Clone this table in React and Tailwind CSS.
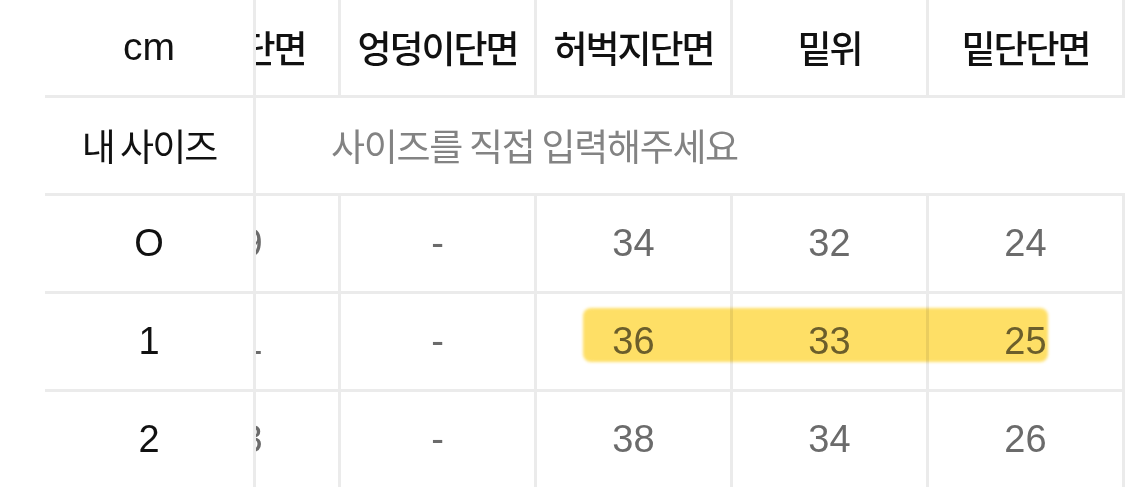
import React, { useLayoutEffect, useRef } from "react";

const KR = { fontFamily: '"Noto Sans CJK KR", "Noto Sans", sans-serif' };
const LAT = { fontFamily: '"Liberation Sans", "Noto Sans CJK KR", sans-serif' };

const cols = [
  { h: "허리단면", v: ["29", "31", "33"] },
  { h: "엉덩이단면", v: ["-", "-", "-"] },
  { h: "허벅지단면", v: ["34", "36", "38"] },
  { h: "밑위", v: ["32", "33", "34"] },
  { h: "밑단단면", v: ["24", "25", "26"] },
];

const sizes = ["O", "1", "2"];

export default function App() {
  const scrollRef = useRef(null);
  useLayoutEffect(() => {
    if (scrollRef.current) scrollRef.current.scrollLeft = 111;
  }, []);

  return (
    <div className="relative w-[1125px] h-[487px] overflow-hidden bg-white flex">
      {/* fixed left column */}
      <div className="w-[256px] shrink-0 pl-[45px] border-r-[3px] border-[#ebebeb] flex flex-col">
        <div className="h-[98px] shrink-0 border-b-[3px] border-[#ebebeb] flex items-center justify-center text-[39px] text-[#111]" style={LAT}>
          cm
        </div>
        <div className="h-[98px] shrink-0 border-b-[3px] border-[#ebebeb] flex items-center justify-center text-[37px] tracking-[-2px] text-[#111]" style={KR}>
          내 사이즈
        </div>
        {sizes.map((s) => (
          <div key={s} className="h-[98px] shrink-0 border-b-[3px] border-[#ebebeb] flex items-center justify-center text-[38px] text-[#111]" style={LAT}>
            {s}
          </div>
        ))}
      </div>

      {/* scrolled table */}
      <div ref={scrollRef} className="flex-1 overflow-hidden">
        <div className="w-[1180px] flex flex-col">
          <div className="h-[98px] shrink-0 flex border-b-[3px] border-[#ebebeb]">
            {cols.map((c) => (
              <div key={c.h} className="w-[196px] shrink-0 border-r-[3px] border-[#ebebeb] flex items-center justify-center text-[37px] font-medium tracking-[-2px] text-[#111]" style={KR}>
                {c.h}
              </div>
            ))}
          </div>
          <div className="h-[98px] shrink-0 flex items-center border-b-[3px] border-[#ebebeb] pl-[186px] text-[37px] tracking-[-1.3px] text-[#838383]" style={KR}>
            사이즈를 직접 입력해주세요
          </div>
          {sizes.map((s, ri) => (
            <div key={s} className="h-[98px] shrink-0 flex border-b-[3px] border-[#ebebeb]">
              {cols.map((c) => (
                <div key={c.h} className="w-[196px] shrink-0 border-r-[3px] border-[#ebebeb] flex items-center justify-center text-[38px] text-[#6b6b6b]" style={LAT}>
                  {c.v[ri]}
                </div>
              ))}
            </div>
          ))}
        </div>
      </div>

      {/* highlighter mark */}
      <div className="absolute left-[583px] top-[308px] w-[465px] h-[54px] rounded-[8px] bg-[#fedf66] mix-blend-multiply blur-[1.5px]" />
    </div>
  );
}
